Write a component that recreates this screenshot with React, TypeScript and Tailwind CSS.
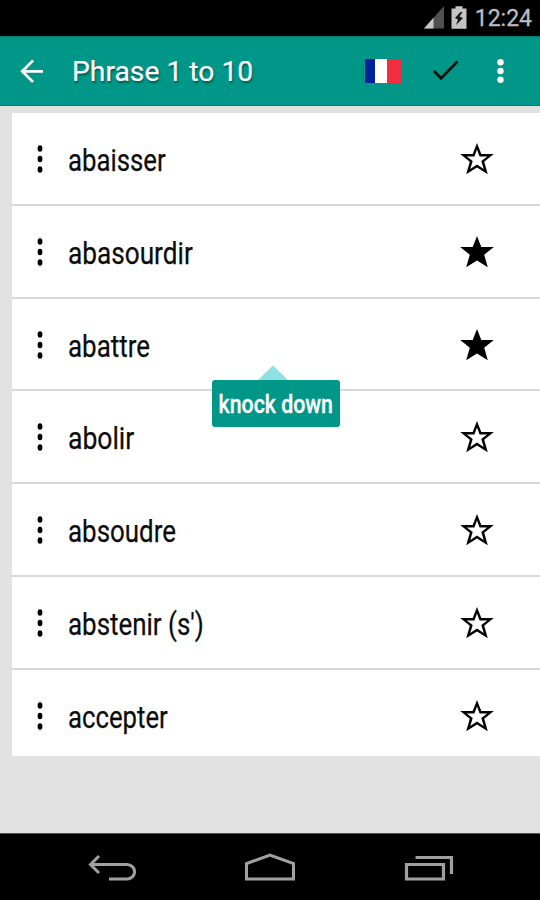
import React from "react";

type Phrase = { text: string; starred: boolean; height: string; scale: string };

const phrases: Phrase[] = [
  { text: "abaisser", starred: false, height: "h-[93px]", scale: "scale-x-[0.83]" },
  { text: "abasourdir", starred: true, height: "h-[93px]", scale: "scale-x-[0.845]" },
  { text: "abattre", starred: true, height: "h-[92px]", scale: "scale-x-[0.836]" },
  { text: "abolir", starred: false, height: "h-[93px]", scale: "scale-x-[0.855]" },
  { text: "absoudre", starred: false, height: "h-[93px]", scale: "scale-x-[0.836]" },
  { text: "abstenir (s')", starred: false, height: "h-[93px]", scale: "scale-x-[0.836]" },
  { text: "accepter", starred: false, height: "h-[86px]", scale: "scale-x-[0.83]" },
];

function StatusBar() {
  return (
    <div className="flex h-9 shrink-0 items-start justify-end bg-black pr-[8px] text-[#bdbdbd]">
      <svg className="mt-[6px] mr-[6px]" width="21" height="23" viewBox="0 0 21 23">
        <path d="M20 0V22.500H0Z" fill="#505050" />
        <path d="M9.500 11.800V22.500H0Z" fill="#c8c8c8" />
      </svg>
      <svg className="mt-[6px] mr-[8px]" width="16" height="23" viewBox="0 0 16 23">
        <path d="M4.500 0.300h7V2.500h4V22.700H0.500V2.500h4Z" fill="#c4c4c4" />
        <path d="M9.500 6L4 12l3 1.500L5 19l7-7-3.500-1.500L11.500 6Z" fill="#151515" />
      </svg>
      <span className="mt-[5px] text-[23px] leading-[28px] [-webkit-text-stroke:0.3px_#bdbdbd]">12:24</span>
    </div>
  );
}

function AppBar() {
  return (
    <header className="flex h-[70px] shrink-0 items-center border-t border-b border-t-[#007c6e] border-b-[#007f72] bg-[#009688]">
      <svg className="mb-px ml-5 shrink-0" width="24" height="24" viewBox="0 0 24 24" fill="none" stroke="white" strokeWidth="2.700">
        <path d="M13 1.500L2.200 12.300L13 23M2.500 12.300H23" />
      </svg>
      <h1 className="mt-[2px] ml-7 origin-left scale-x-[1.01] whitespace-nowrap text-[28px] leading-8 text-white [-webkit-text-stroke:0.2px_white] [text-shadow:1px_2px_2px_rgba(0,0,0,0.4)]">
        Phrase 1 to 10
      </h1>
      <div className="mr-[36px] mb-px ml-auto flex items-center">
        <div className="flex h-6 w-[36px]">
          <span className="w-[10px] bg-[#00209c]" />
          <span className="w-[12px] bg-white" />
          <span className="w-[14px] bg-[#f02f40]" />
        </div>
        <svg className="ml-[32px]" width="26" height="22" viewBox="0 0 26 22" fill="none" stroke="#0a0f0e" strokeWidth="2.700">
          <path d="M1 11L8 18.200L24.500 1.500" />
        </svg>
        <svg className="ml-[38px]" width="7" height="26" viewBox="0 0 7 26" fill="white">
          <circle cx="3.500" cy="4.200" r="3.200" />
          <circle cx="3.500" cy="13" r="3.200" />
          <circle cx="3.500" cy="21.800" r="3.200" />
        </svg>
      </div>
    </header>
  );
}

function Star({ filled }: { filled: boolean }) {
  const outer = "M17 0L21.300 11H33.800L24.200 18.800L27.800 31.300L17 24.500L6.200 31.300L9.800 18.800L0.200 11H12.700Z";
  const inner = "M17 6.500L19.600 13.500H27.200L21.300 18L23.700 25.900L17 21.600L10.300 25.900L12.700 18L6.800 13.500H14.400Z";
  return (
    <svg className="ml-auto mr-[46px] shrink-0" width="34" height="32" viewBox="0 0 34 32" fillRule="evenodd">
      <path d={filled ? outer : outer + inner} />
    </svg>
  );
}

function PhraseRow({ phrase, last }: { phrase: Phrase; last: boolean }) {
  return (
    <li className={`${phrase.height} ${last ? "" : "border-b-2 border-[#d9d9d9]"} flex items-start bg-white`}>
      <div className="flex h-[92px] w-full items-center">
        <svg className="ml-[25px] shrink-0" width="6" height="30" viewBox="0 0 6 30">
          <ellipse cx="3" cy="4.500" rx="2.400" ry="3.300" />
          <ellipse cx="3" cy="15" rx="2.400" ry="3.300" />
          <ellipse cx="3" cy="25.500" rx="2.400" ry="3.300" />
        </svg>
        <span className={`${phrase.scale} ml-[25px] mt-[3px] origin-left whitespace-nowrap text-[31px] leading-9 text-[#0c0c0c] [-webkit-text-stroke:0.25px_#0c0c0c]`}>
          {phrase.text}
        </span>
        <Star filled={phrase.starred} />
      </div>
    </li>
  );
}

function Tooltip() {
  return (
    <div className="absolute top-[252px] left-[200px] flex w-[128px] flex-col items-center">
      <svg className="mr-[6px]" width="30" height="15" viewBox="0 0 30 15">
        <path d="M15 0.500L30 15H0Z" fill="#8fe0e3" />
      </svg>
      <div className="flex h-[47px] w-full items-center justify-center rounded-[3px] bg-[#009688]">
        <span className="mt-px scale-x-[0.82] whitespace-nowrap text-[26px] font-medium leading-8 text-white [-webkit-text-stroke:0.3px_white]">knock down</span>
      </div>
    </div>
  );
}

function NavBar() {
  return (
    <nav className="flex h-[67px] shrink-0 items-center border-t border-[#555] bg-black pt-px" aria-label="System">
      <svg className="ml-[88px]" width="48" height="30" viewBox="0 0 48 30" fill="none" stroke="#a0a0a0" strokeWidth="3">
        <path d="M11 3L2.500 11.500L11 20M3 11.500H39A7.500 7.200 0 0 1 39 26H21" />
      </svg>
      <svg className="ml-[107px]" width="52" height="30" viewBox="0 0 52 30" fill="none" stroke="#a0a0a0" strokeWidth="3">
        <path d="M3.500 26V10.500L27 2L50.500 10.500V26Z" />
      </svg>
      <svg className="ml-[107px]" width="52" height="30" viewBox="0 0 52 30" fill="none" stroke="#a0a0a0" strokeWidth="3.200">
        <path d="M4.500 11.500H41.500V26H4.500ZM13.500 4.500H49.500V21" />
      </svg>
    </nav>
  );
}

export default function App() {
  return (
    <div className="flex h-[900px] w-[540px] flex-col overflow-hidden bg-[#e2e2e2] font-['Roboto',sans-serif]">
      <StatusBar />
      <AppBar />
      <main className="flex-1 pt-[7px] pl-3">
        <div className="relative">
          <ul>
            {phrases.map((phrase, i) => (
              <PhraseRow key={phrase.text} phrase={phrase} last={i === phrases.length - 1} />
            ))}
          </ul>
          <Tooltip />
        </div>
      </main>
      <NavBar />
    </div>
  );
}
